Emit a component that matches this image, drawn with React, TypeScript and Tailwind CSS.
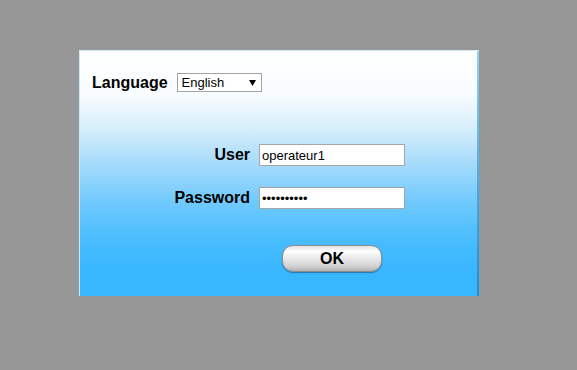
import React from "react";

export default function App() {
  const font = { fontFamily: '"Liberation Sans", Arial, sans-serif' };
  return (
    <div className="w-[577px] h-[370px] bg-[#979797] pt-[50px] pl-[79px]" style={font}>
      <div className="relative w-[400px] h-[246px] border-t border-l border-[#cfe9f8] bg-[linear-gradient(to_bottom,#ffffff_0%,#f8fcff_18%,#d8effc_31%,#a6dbfb_46%,#6fc9fd_62%,#48bcfe_78%,#38b6ff_90%,#38b6ff_100%)]">
        <div className="absolute right-0 top-0 h-full w-[2px] bg-[linear-gradient(to_bottom,#8fd3f3,#3aa8ea_60%,#1a8ed8)]" />
        {/* Language row */}
        <div className="flex items-center h-[19px] mt-[22px] pl-[12px] gap-[9px]">
          <span className="text-[16px] font-bold text-black leading-none">Language</span>
          <div className="relative w-[85px] h-[19px] border border-[#a3a3a3] bg-white flex items-center pl-[4px]">
            <span className="text-[13px] text-black leading-none">English</span>
            <svg className="absolute right-[5px] top-[6px]" width="7" height="6" viewBox="0 0 7 6">
              <polygon points="0,0 7,0 3.5,6" fill="#000" />
            </svg>
          </div>
        </div>
        {/* User row */}
        <div className="flex items-center h-[22px] mt-[52px] pl-[70px] gap-[9px]">
          <span className="w-[100px] text-right text-[16px] font-bold text-black leading-none">User</span>
          <div className="w-[146px] h-[22px] border border-[#a6a6a6] bg-white flex items-center pl-[2px]">
            <span className="text-[13px] text-black leading-none">operateur1</span>
          </div>
        </div>
        {/* Password row */}
        <div className="flex items-center h-[22px] mt-[21px] pl-[70px] gap-[9px]">
          <span className="w-[100px] text-right text-[16px] font-bold text-black leading-none">Password</span>
          <div className="w-[146px] h-[22px] border border-[#a6a6a6] bg-white flex items-center pl-[2px]">
            <span className="text-[13px] text-black leading-none">••••••••••</span>
          </div>
        </div>
        {/* OK */}
        <div className="mt-[36px] pl-[202px]">
          <div className="w-[100px] h-[27px] rounded-[11px] border border-[#8c8c8c] bg-[linear-gradient(to_bottom,#e2e2e2_0%,#ffffff_22%,#ececec_45%,#d2d2d2_80%,#b4b4b4_100%)] shadow-[0_1px_1px_rgba(0,0,0,0.35)] flex items-center justify-center">
            <span className="text-[16px] font-bold text-black leading-none">OK</span>
          </div>
        </div>
      </div>
    </div>
  );
}
